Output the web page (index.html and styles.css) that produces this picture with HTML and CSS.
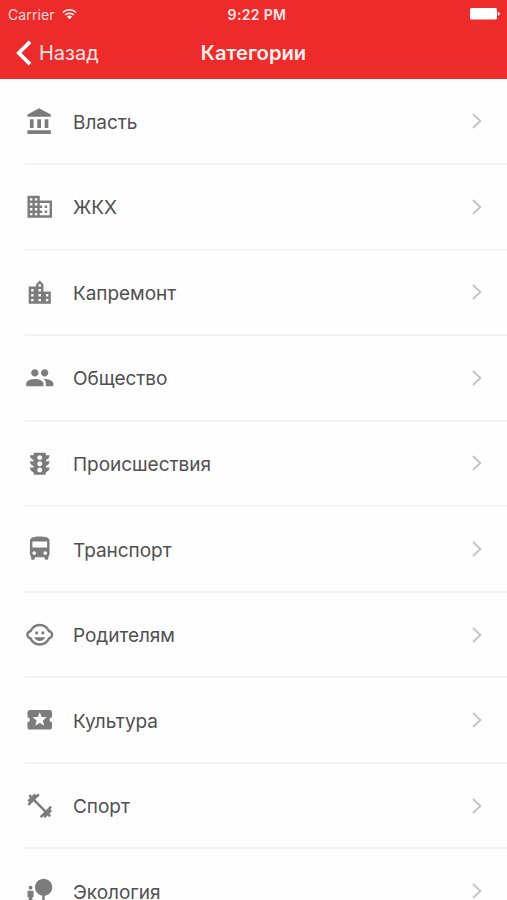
FILE: index.html
```html
<!DOCTYPE html>
<html lang="ru">
<head>
<meta charset="utf-8">
<title>Категории</title>
<link rel="stylesheet" href="styles.css">
</head>
<body>
<header class="header">
  <div class="status">
    <div class="carrier"><span>Carrier</span>
      <svg class="wifi" viewBox="0 0 16 12"><g fill="none" stroke="currentColor" stroke-width="1.7"><path d="M1 4.4a10 10 0 0 1 14 0"/><path d="M3.5 7a6.4 6.4 0 0 1 9 0"/></g><path fill="currentColor" d="M5.3 8.8a3.9 3.9 0 0 1 5.4 0L8 11.5z"/></svg>
    </div>
    <div class="time">9:22 PM</div>
    <svg class="battery" viewBox="0 0 30 12"><rect width="27" height="11.5" rx="1.6" fill="currentColor"/><path fill="currentColor" d="M27.8 3.8q2 .5 2 2t-2 2z"/></svg>
  </div>
  <nav class="nav">
    <a class="back"><svg class="back-icon" viewBox="0 0 16 26"><path d="M14 1.8 2.8 13 14 24.2" fill="none" stroke="currentColor" stroke-width="3.8"/></svg><span>Назад</span></a>
    <h1 class="title">Категории</h1>
  </nav>
</header>
<main class="list">
  <a class="row"><svg class="icon" viewBox="0 0 24 24"><path d="M4 10v7h3v-7H4zm6 0v7h3v-7h-3zM2 22h19v-3H2v3zm14-12v7h3v-7h-3zm-4.500-9L2 6v2h19V6l-9.500-5z"/></svg><span class="label">Власть</span><svg class="chevron" viewBox="0 0 10 16"><path d="m1 1 7.300 7L1 15"/></svg></a>
  <a class="row"><svg class="icon" viewBox="0 0 24 24"><path d="M12 7V3H2v18h20V7H12zM6 19H4v-2h2v2zm0-4H4v-2h2v2zm0-4H4V9h2v2zm0-4H4V5h2v2zm4 12H8v-2h2v2zm0-4H8v-2h2v2zm0-4H8V9h2v2zm0-4H8V5h2v2zm10 12h-8v-2h2v-2h-2v-2h2v-2h-2V9h8v10zm-2-8h-2v2h2v-2zm0 4h-2v2h2v-2z"/></svg><span class="label">ЖКХ</span><svg class="chevron" viewBox="0 0 10 16"><path d="m1 1 7.300 7L1 15"/></svg></a>
  <a class="row"><svg class="icon" viewBox="0 0 24 24"><path d="M15 11V5l-3-3-3 3v2H3v14h18V11h-6zm-8 8H5v-2h2v2zm0-4H5v-2h2v2zm0-4H5V9h2v2zm6 8h-2v-2h2v2zm0-4h-2v-2h2v2zm0-4h-2V9h2v2zm0-4h-2V5h2v2zm6 12h-2v-2h2v2zm0-4h-2v-2h2v2z"/></svg><span class="label">Капремонт</span><svg class="chevron" viewBox="0 0 10 16"><path d="m1 1 7.300 7L1 15"/></svg></a>
  <a class="row"><svg class="icon" viewBox="0 0 24 24"><path d="M16 11c1.660 0 2.990-1.340 2.990-3S17.660 5 16 5c-1.660 0-3 1.340-3 3s1.340 3 3 3zm-8 0c1.660 0 2.990-1.340 2.990-3S9.660 5 8 5C6.340 5 5 6.340 5 8s1.340 3 3 3zm0 2c-2.330 0-7 1.170-7 3.500V19h14v-2.500c0-2.330-4.670-3.500-7-3.500zm8 0c-.29 0-.62.02-.97.05 1.160.84 1.970 1.970 1.970 3.450V19h6v-2.500c0-2.330-4.670-3.500-7-3.500z"/></svg><span class="label">Общество</span><svg class="chevron" viewBox="0 0 10 16"><path d="m1 1 7.300 7L1 15"/></svg></a>
  <a class="row"><svg class="icon" viewBox="0 0 24 24"><path d="M20 10h-3V8.860c1.720-.45 3-2 3-3.860h-3V4c0-.55-.45-1-1-1H8c-.55 0-1 .45-1 1v1H4c0 1.860 1.280 3.410 3 3.860V10H4c0 1.860 1.280 3.410 3 3.860V15H4c0 1.860 1.280 3.410 3 3.860V20c0 .55.45 1 1 1h8c.55 0 1-.45 1-1v-1.140c1.720-.45 3-2 3-3.860h-3v-1.140c1.720-.45 3-2 3-3.860zm-8 9c-1.110 0-2-.9-2-2s.89-2 2-2c1.100 0 2 .9 2 2s-.89 2-2 2zm0-5c-1.110 0-2-.9-2-2s.89-2 2-2c1.100 0 2 .9 2 2s-.89 2-2 2zm0-5c-1.110 0-2-.9-2-2 0-1.110.89-2 2-2 1.100 0 2 .89 2 2 0 1.100-.89 2-2 2z"/></svg><span class="label">Происшествия</span><svg class="chevron" viewBox="0 0 10 16"><path d="m1 1 7.300 7L1 15"/></svg></a>
  <a class="row"><svg class="icon" viewBox="0 0 24 24"><path d="M4 16c0 .88.39 1.670 1 2.220V20c0 .55.45 1 1 1h1c.55 0 1-.45 1-1v-1h8v1c0 .55.45 1 1 1h1c.55 0 1-.45 1-1v-1.780c.61-.55 1-1.340 1-2.220V6c0-3.500-3.580-4-8-4s-8 .5-8 4v10zm3.500 1c-.83 0-1.500-.67-1.500-1.500S6.670 14 7.500 14s1.500.67 1.500 1.500S8.330 17 7.500 17zm9 0c-.83 0-1.500-.67-1.500-1.500s.67-1.500 1.500-1.500 1.500.67 1.500 1.500-.67 1.500-1.500 1.500zm1.500-6H6V6h12v5z"/></svg><span class="label">Транспорт</span><svg class="chevron" viewBox="0 0 10 16"><path d="m1 1 7.300 7L1 15"/></svg></a>
  <a class="row"><svg class="icon" viewBox="0 0 24 24"><circle cx="14.500" cy="10.500" r="1.250"/><circle cx="9.500" cy="10.500" r="1.250"/><path d="M22.940 12.660c.04-.21.06-.43.06-.66s-.02-.45-.06-.66c-.25-1.510-1.360-2.740-2.810-3.170-.53-1.120-1.280-2.100-2.190-2.910C16.360 3.850 14.280 3 12 3s-4.360.85-5.940 2.260c-.92.81-1.670 1.800-2.190 2.910-1.450.43-2.560 1.650-2.810 3.170-.04.21-.06.43-.06.66s.02.45.06.66c.25 1.510 1.360 2.740 2.810 3.170.52 1.110 1.270 2.090 2.170 2.890C7.620 20.140 9.710 21 12 21s4.380-.86 5.970-2.280c.9-.8 1.650-1.790 2.170-2.890 1.440-.43 2.550-1.650 2.800-3.170zM19 14c-.1 0-.19-.02-.29-.03-.2.67-.49 1.290-.86 1.860C16.600 17.740 14.450 19 12 19s-4.600-1.260-5.850-3.170c-.37-.57-.66-1.190-.86-1.860-.1.010-.19.030-.29.030-1.100 0-2-.9-2-2s.9-2 2-2c.1 0 .19.020.29.030.2-.67.49-1.290.86-1.860C7.400 6.260 9.550 5 12 5s4.600 1.260 5.850 3.170c.37.57.66 1.190.86 1.860.1-.01.19-.03.29-.03 1.100 0 2 .9 2 2s-.9 2-2 2zM7.500 14c.76 1.770 2.490 3 4.500 3s3.740-1.230 4.500-3h-9z"/></svg><span class="label">Родителям</span><svg class="chevron" viewBox="0 0 10 16"><path d="m1 1 7.300 7L1 15"/></svg></a>
  <a class="row"><svg class="icon" viewBox="0 0 24 24"><path d="M20 12c0-1.100.9-2 2-2V6c0-1.100-.9-2-2-2H4c-1.100 0-1.990.9-1.990 2v4c1.100 0 1.990.9 1.990 2s-.89 2-2 2v4c0 1.100.9 2 2 2h16c1.100 0 2-.9 2-2v-4c-1.100 0-2-.9-2-2zm-4.420 4.800L12 14.500l-3.580 2.300 1.080-4.120-3.290-2.690 4.240-.25L12 5.800l1.540 3.950 4.240.25-3.290 2.690 1.090 4.110z"/></svg><span class="label">Культура</span><svg class="chevron" viewBox="0 0 10 16"><path d="m1 1 7.300 7L1 15"/></svg></a>
  <a class="row"><svg class="icon" viewBox="0 0 24 24"><path d="M20.570 14.860L22 13.430 20.570 12 17 15.570 8.430 7 12 3.430 10.570 2 9.140 3.430 7.710 2 5.570 4.140 4.140 2.710 2.710 4.140l1.430 1.430L2 7.710l1.430 1.430L2 10.570 3.430 12 7 8.430 15.570 17 12 20.570 13.430 22l1.430-1.430L16.290 22l2.140-2.140 1.430 1.430 1.430-1.430-1.430-1.430L22 16.290z"/></svg><span class="label">Спорт</span><svg class="chevron" viewBox="0 0 10 16"><path d="m1 1 7.300 7L1 15"/></svg></a>
  <a class="row"><svg class="icon" viewBox="0 0 24 24"><path d="M22.170 9.170c0-3.870-3.130-7-7-7s-7 3.130-7 7c0 3.470 2.520 6.340 5.830 6.890V20H6v-3h1v-4c0-.55-.45-1-1-1H3c-.55 0-1 .45-1 1v4h1v5h16v-2h-3v-3.880c3.470-.41 6.170-3.360 6.170-6.950zM4.500 11c.83 0 1.500-.67 1.500-1.500S5.330 8 4.500 8 3 8.670 3 9.500 3.670 11 4.500 11z"/></svg><span class="label">Экология</span><svg class="chevron" viewBox="0 0 10 16"><path d="m1 1 7.300 7L1 15"/></svg></a>
</main>
</body>
</html>
```
FILE: styles.css
```css
* { box-sizing: border-box; }
body {
  margin: 0;
  height: 900px;
  overflow: hidden;
  display: flex;
  flex-direction: column;
  background: #fefefe;
  font-family: Inter, "Liberation Sans", sans-serif;
}
.header {
  flex: none;
  height: 79px;
  background: #ed2b2a;
  color: #fff;
}
.status {
  height: 27px;
  padding: 0 7px 0 14px;
  display: grid;
  grid-template-columns: 1fr auto 1fr;
  align-items: center;
  font-size: 14px;
  line-height: 27px;
}
.carrier { display: flex; align-items: center; gap: 7px; margin-left: -6px; color: #ffdcda; letter-spacing: 0.1px; }
.wifi { width: 15px; height: 12px; color: #fff; }
.time { padding-top: 1px; font-weight: 600; color: #ffe9e8; letter-spacing: 0.35px; }
.battery { width: 30px; height: 12px; justify-self: end; }
.nav {
  height: 51px;
  padding: 0 16px;
  display: grid;
  grid-template-columns: 1fr auto 1fr;
  align-items: center;
}
.back { display: flex; align-items: center; gap: 7px; font-size: 20px; color: #ffe3e2; }
.back-icon { width: 16px; height: 26px; color: #fff; }
.title { margin: 0; font-size: 20.2px; font-weight: 600; color: #ffefee; }
.list { flex: none; padding-top: 0.5px; }
.row {
  height: 85.55px;
  margin-left: 25px;
  padding-right: 25px;
  display: flex;
  align-items: center;
  border-bottom: 2px solid #f2f2f2;
}
.icon { width: 29.5px; height: 29.5px; fill: #7c7c7c; flex: none; }
.label { flex: 1; margin-left: 18.5px; padding-top: 3px; font-size: 19px; line-height: 24px; letter-spacing: -0.04px; color: #505050; }
.chevron { width: 10px; height: 16px; fill: none; stroke: #c6c6c8; stroke-width: 2; flex: none; }
```
